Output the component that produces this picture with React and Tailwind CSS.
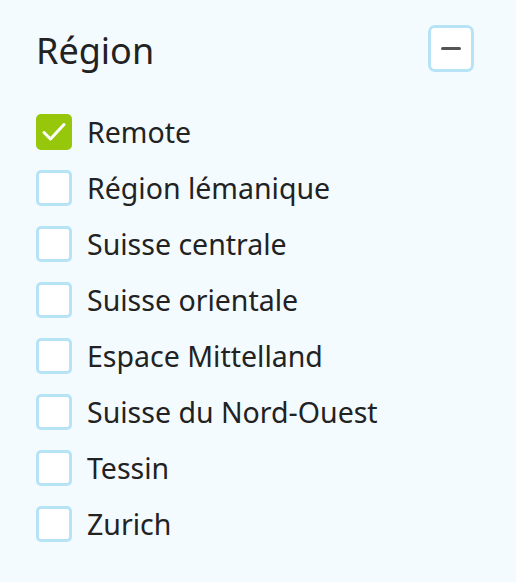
import React, { useState } from 'react';

const REGIONS = [
  'Remote',
  'Région lémanique',
  'Suisse centrale',
  'Suisse orientale',
  'Espace Mittelland',
  'Suisse du Nord-Ouest',
  'Tessin',
  'Zurich',
];

function Checkbox({ checked }) {
  if (checked) {
    return (
      <span className="flex h-[36px] w-[36px] shrink-0 items-center justify-center rounded-[5px] bg-[#97c70b]">
        <svg width="26" height="22" viewBox="0 0 26 22" fill="none">
          <path d="M3 11.5 L9.5 18 L23 3.5" stroke="#fff" strokeWidth="3" strokeLinecap="round" strokeLinejoin="round" />
        </svg>
      </span>
    );
  }
  return <span className="h-[36px] w-[36px] shrink-0 rounded-[5px] border-[3px] border-[#b6e4f6] bg-white" />;
}

export default function App() {
  const [selected, setSelected] = useState({ Remote: true });

  return (
    <div className="h-[582px] w-[516px] bg-[#f3fbff] pl-[36px] pr-[42px] pt-[25px] text-[#222]" style={{ fontFamily: '"Noto Sans", "Open Sans", sans-serif' }}>
      <div className="flex h-[50px] items-start justify-between">
        <h2 className="mt-[2px] text-[36px] leading-[48px]">Région</h2>
        <button className="flex h-[47px] w-[46px] items-center justify-center rounded-[7px] border-[3px] border-[#b6e4f6] bg-white">
          <span className="block h-[3px] w-[20px] rounded-full bg-[#555]" />
        </button>
      </div>

      <ul className="mt-[39px] flex flex-col gap-[20px]">
        {REGIONS.map(r => (
          <li key={r} className="flex h-[36px] items-center gap-[15px]" onClick={() => setSelected(s => ({ ...s, [r]: !s[r] }))}>
            <Checkbox checked={!!selected[r]} />
            <span className="text-[28.5px] leading-none">{r}</span>
          </li>
        ))}
      </ul>
    </div>
  );
}
